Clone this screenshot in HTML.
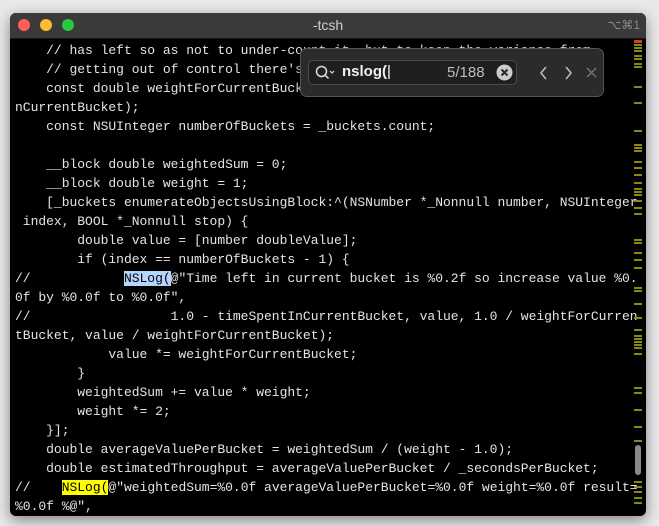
<!DOCTYPE html>
<html><head><meta charset="utf-8"><style>
html,body{margin:0;padding:0;width:659px;height:526px;background:#e9e9e9;overflow:hidden}
.win{position:absolute;left:10px;top:13px;width:636px;height:503px;background:#000;border-radius:6px;overflow:hidden;box-shadow:0 4px 14px rgba(0,0,0,.45)}
.title{position:absolute;left:0;top:0;width:636px;height:25px;background:#3a3a3a;border-bottom:1px solid #1a1a1a}
.title .t{position:absolute;left:0;right:0;top:4px;text-align:center;color:#cfcfcf;font:14px "Liberation Sans",sans-serif}
.title .k{position:absolute;right:6px;top:5px;color:#8a8a8a;font:12px "Liberation Sans","DejaVu Sans",sans-serif}
.dot{position:absolute;top:6px;width:12px;height:12px;border-radius:50%}
pre{position:absolute;left:5px;top:28px;margin:0;font:13px/19px "Liberation Mono",monospace;color:#e4e4e4;letter-spacing:-0.02px}
.hl1{background:#b5d5ff;color:#000}
.hl2{background:#ffff00;color:#000}
.sb{position:absolute;left:624px;width:8px;height:2px;background:#8a8a10}
.find{position:absolute;left:290px;top:35px;width:302px;height:47px;background:#2b2b2b;border:1px solid #555;border-radius:7px;box-shadow:0 2px 6px rgba(0,0,0,.6)}
.field{position:absolute;left:7px;top:11px;width:207px;height:23px;background:#1f1f1f;border:1px solid #4a4a4a;border-radius:5px}
.ft{position:absolute;left:33px;top:2px;color:#f0f0f0;font:bold 15px "Liberation Sans",sans-serif}
.cnt{position:absolute;left:138px;top:3px;color:#bdbdbd;font:15px "Liberation Sans",sans-serif}
</style></head><body>
<div class="win">
<div class="title">
<div class="dot" style="left:8px;background:#fe5f57"></div>
<div class="dot" style="left:30px;background:#febc2e"></div>
<div class="dot" style="left:52px;background:#28c840"></div>
<div class="t">-tcsh</div><div class="k">⌥⌘1</div>
</div>
<pre>    // has left so as not to under-count it, but to keep the variance from
    // getting out of control there's
    const double weightForCurrentBucket = MIN(1.0, 1.0 - timeSpentI
nCurrentBucket);
    const NSUInteger numberOfBuckets = _buckets.count;

    __block double weightedSum = 0;
    __block double weight = 1;
    [_buckets enumerateObjectsUsingBlock:^(NSNumber *_Nonnull number, NSUInteger
 index, BOOL *_Nonnull stop) {
        double value = [number doubleValue];
        if (index == numberOfBuckets - 1) {
//            <span class="hl1">NSLog(</span>@"Time left in current bucket is %0.2f so increase value %0.
0f by %0.0f to %0.0f",
//                  1.0 - timeSpentInCurrentBucket, value, 1.0 / weightForCurren
tBucket, value / weightForCurrentBucket);
            value *= weightForCurrentBucket;
        }
        weightedSum += value * weight;
        weight *= 2;
    }];
    double averageValuePerBucket = weightedSum / (weight - 1.0);
    double estimatedThroughput = averageValuePerBucket / _secondsPerBucket;
//    <span class="hl2">NSLog(</span>@"weightedSum=%0.0f averageValuePerBucket=%0.0f weight=%0.0f result=
%0.0f %@",</pre>
<div style="position:absolute;left:624px;top:27px;width:8px;height:3px;background:#d04020"></div>
<div class="sb" style="top:31px"></div><div class="sb" style="top:34px"></div><div class="sb" style="top:37px"></div>
<div class="sb" style="top:42px"></div><div class="sb" style="top:45px"></div>
<div class="sb" style="top:50px"></div><div class="sb" style="top:53px"></div>
<div class="sb" style="top:73px"></div><div class="sb" style="top:89px"></div><div class="sb" style="top:117px"></div>
<div class="sb" style="top:131px"></div><div class="sb" style="top:134px"></div><div class="sb" style="top:137px"></div>
<div class="sb" style="top:148px"></div><div class="sb" style="top:154px"></div><div class="sb" style="top:161px"></div>
<div class="sb" style="top:169px"></div><div class="sb" style="top:175px"></div><div class="sb" style="top:178px"></div><div class="sb" style="top:181px"></div>
<div class="sb" style="top:187px"></div><div class="sb" style="top:194px"></div><div class="sb" style="top:200px"></div>
<div class="sb" style="top:226px"></div><div class="sb" style="top:229px"></div>
<div class="sb" style="top:239px"></div><div class="sb" style="top:246px"></div><div class="sb" style="top:254px"></div>
<div class="sb" style="top:274px"></div><div class="sb" style="top:277px"></div>
<div class="sb" style="top:290px"></div><div class="sb" style="top:304px"></div><div class="sb" style="top:316px"></div>
<div class="sb" style="top:322px"></div><div class="sb" style="top:325px"></div><div class="sb" style="top:328px"></div><div class="sb" style="top:331px"></div><div class="sb" style="top:334px"></div>
<div class="sb" style="top:340px"></div><div class="sb" style="top:374px"></div><div class="sb" style="top:379px"></div>
<div class="sb" style="top:396px"></div><div class="sb" style="top:413px"></div><div class="sb" style="top:427px"></div>
<div style="position:absolute;left:625px;top:432px;width:6px;height:30px;border-radius:3px;background:#8a8a8a"></div>
<div class="sb" style="top:468px"></div><div class="sb" style="top:473px"></div><div class="sb" style="top:478px"></div><div class="sb" style="top:484px"></div><div class="sb" style="top:489px"></div>
<div class="find">
<div class="field">
<svg style="position:absolute;left:6px;top:4px" width="22" height="15" viewBox="0 0 22 15"><circle cx="6.5" cy="6.5" r="5" fill="none" stroke="#ddd" stroke-width="1.5"/><line x1="10" y1="10" x2="13.5" y2="13.5" stroke="#ddd" stroke-width="1.5"/><polyline points="15,6 17,8 19,6" fill="none" stroke="#ddd" stroke-width="1.2"/></svg>
<div class="ft">nslog(<span style="font-weight:normal;color:#fff">|</span></div>
<div class="cnt">5/188</div>
<svg style="position:absolute;left:187px;top:3px" width="17" height="17" viewBox="0 0 17 17"><circle cx="8.5" cy="8.5" r="8" fill="#ccc"/><path d="M5.5 5.5L11.5 11.5M11.5 5.5L5.5 11.5" stroke="#2a2a2a" stroke-width="2"/></svg>
</div>
<svg style="position:absolute;left:238px;top:16px" width="60" height="16" viewBox="0 0 60 16"><polyline points="7,2 2,8 7,14" fill="none" stroke="#bbb" stroke-width="1.6"/><polyline points="27,2 32,8 27,14" fill="none" stroke="#bbb" stroke-width="1.6"/><path d="M48 3L57 12M57 3L48 12" stroke="#777" stroke-width="1.4"/></svg>
</div>
</div>
</body></html>
